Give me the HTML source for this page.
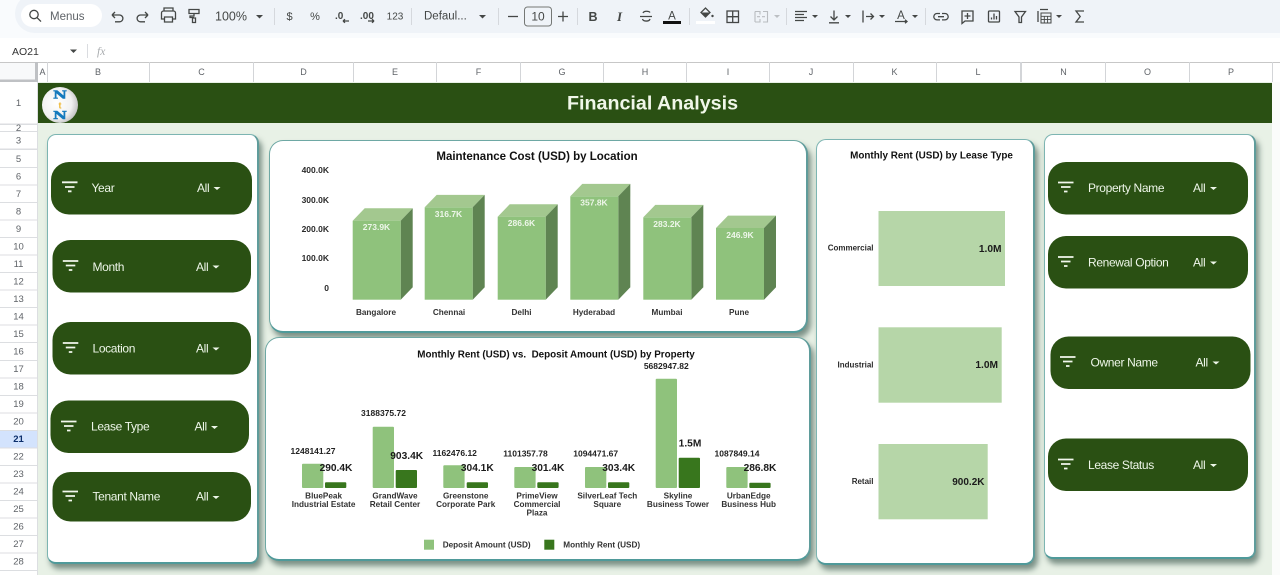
<!DOCTYPE html>
<html lang="en">
<head>
<meta charset="utf-8">
<title>Financial Analysis</title>
<style>
html,body{margin:0;padding:0;width:1280px;height:575px;overflow:hidden;background:#e8f1e6;font-family:"Liberation Sans",sans-serif}
.abs{position:absolute}
#tb{left:0;top:0;width:1280px;height:38px;background:#f9fbfd}
#tb2{left:15px;top:-6px;width:1265px;height:39px;background:#eff3f8;border-radius:20px 0 0 20px}
#fb{left:0;top:38px;width:1280px;height:24px;background:#fff}
#ch{left:0;top:62px;width:1280px;height:20px;background:#fff;border-top:1px solid #c7c7c7;box-sizing:border-box}
#rh{left:0;top:82px;width:38px;height:493px;background:#fff}
#hd{left:38px;top:82.5px;width:1234px;height:40.5px;background:#2a5013}
#rs{left:1272px;top:82px;width:8px;height:493px;background:#fbfcfb}
.p{position:absolute;box-sizing:border-box;background:#fff;border:1px solid #7db5b2;border-bottom:2px solid #4f9a9a;border-right:2px solid #5f9c9b;box-shadow:3px 5px 6px rgba(50,80,70,.6)}
.c{border:1.5px solid #6ea8a4;border-bottom:2.5px solid #4f9a9a;border-right:2.5px solid #5f9c9b}
svg{position:absolute;left:0;top:0}
text{font-family:"Liberation Sans",sans-serif}
.h{font-size:9px;fill:#5f6368;text-anchor:middle}
.r{font-size:9.5px;fill:#5f6368;text-anchor:middle}
.ic{fill:none;stroke:#444746;stroke-width:1.3}
.ar{fill:#444746}
.t{font-weight:bold;fill:#111;text-anchor:middle}
.ax{font-weight:bold;font-size:8.5px;fill:#2b2b2b}
.dl{font-weight:bold;font-size:8.5px;fill:#eef6ea;text-anchor:middle}
.cat{font-weight:bold;font-size:8.2px;fill:#333;text-anchor:middle}
.dep{font-weight:bold;font-size:8.5px;fill:#222;text-anchor:middle}
.rent{font-weight:bold;font-size:10.2px;fill:#1b1b1b;text-anchor:middle}
.pl{font-size:12px;fill:#eef6e9;letter-spacing:-.35px;font-weight:500}
.fl{stroke:#f2f7ee;stroke-width:1.8}
.pa{fill:#eef6e9}
</style>
</head>
<body>
<div class="abs" id="tb"></div>
<div class="abs" id="tb2"></div>
<div class="abs" id="fb"></div>
<div class="abs" id="ch"></div>
<div class="abs" id="rh"></div>
<div class="abs" id="hd"></div>
<div class="abs" id="rs"></div>

<div class="p" style="left:47px;top:134px;width:212px;height:430px;border-radius:9px"></div>
<div class="p c" style="left:269px;top:140px;width:539px;height:193px;border-radius:14px"></div>
<div class="p c" style="left:265px;top:337px;width:546px;height:224px;border-radius:14px"></div>
<div class="p" style="left:816px;top:139px;width:219px;height:426px;border-radius:10px"></div>
<div class="p" style="left:1044px;top:134px;width:212px;height:425px;border-radius:9px"></div>

<svg width="1280" height="575" viewBox="0 0 1280 575" xmlns="http://www.w3.org/2000/svg">
<!-- toolbar -->
<rect x="21" y="4" width="81" height="23" rx="11.5" fill="#fff"/>
<circle cx="34" cy="14.5" r="4.2" class="ic"/><path d="M37 17.6l4 4" class="ic"/>
<text x="50" y="20" font-size="11.5" fill="#5f6368">Menus</text>
<path d="M112 15h7.5a3.4 3.4 0 0 1 0 6.8H115M112 15l3-3M112 15l3 3" class="ic"/>
<path d="M148 15h-7.5a3.4 3.4 0 0 0 0 6.8H145M148 15l-3-3M148 15l-3 3" class="ic"/>
<path d="M164 12v-3h9v3M164 20h-2.5v-6a2 2 0 0 1 2-2h10a2 2 0 0 1 2 2v6H173M164.500 18h8v5h-8z" class="ic" transform="translate(0 -1)"/>
<path d="M189 10.500h10v4h-10zM194 14.500v2.500h-4v1.500h4M192.500 19h3v4.500h-3z" class="ic" transform="translate(0 -1)"/>
<text x="215" y="20.500" font-size="12.500" fill="#444746">100%</text>
<path d="M256 15h7l-3.500 3.500z" class="ar"/>
<rect x="274" y="8" width="1" height="17" fill="#d5d8dd"/>
<text x="289.500" y="20" font-size="11" text-anchor="middle" fill="#444746">$</text>
<text x="315" y="20" font-size="11" text-anchor="middle" fill="#444746">%</text>
<text x="335" y="19" font-size="10" font-weight="bold" fill="#444746">.0</text>
<path d="M349 21h-6M343 21l2-1.700M343 21l2 1.700" class="ic" stroke-width="1.100"/>
<text x="360" y="19" font-size="10" font-weight="bold" fill="#444746">.00</text>
<path d="M368 21h6M374 21l-2-1.700M374 21l-2 1.700" class="ic" stroke-width="1.100"/>
<text x="395" y="19.500" font-size="10" text-anchor="middle" fill="#444746">123</text>
<rect x="411" y="8" width="1" height="17" fill="#d5d8dd"/>
<text x="424" y="19.500" font-size="11.500" fill="#444746">Defaul...</text>
<path d="M479 15h7l-3.500 3.500z" class="ar"/>
<rect x="498" y="8" width="1" height="17" fill="#d5d8dd"/>
<path d="M508 16.500h10" class="ic"/>
<rect x="524.500" y="7" width="27" height="19" rx="3" fill="none" stroke="#747775"/>
<text x="538" y="20.500" font-size="12" text-anchor="middle" fill="#444746">10</text>
<path d="M558 16.500h10M563 11.500v10" class="ic"/>
<rect x="577" y="8" width="1" height="17" fill="#d5d8dd"/>
<text x="593" y="21" font-size="12.500" font-weight="bold" text-anchor="middle" fill="#444746">B</text>
<text x="619.500" y="21" font-size="13" font-weight="bold" font-style="italic" text-anchor="middle" fill="#444746" style="font-family:'Liberation Serif',serif">I</text>
<path d="M640 16.500h12M650 12.500c-1-1.500-6-2-7 .5M642.500 19c.5 2.500 6.500 3 7.500 0" class="ic"/>
<text x="672" y="19.500" font-size="11.500" text-anchor="middle" fill="#444746">A</text>
<rect x="663" y="21" width="18" height="3" fill="#111"/>
<rect x="689" y="8" width="1" height="17" fill="#d5d8dd"/>
<rect x="696" y="21" width="19" height="3" fill="#fff"/>
<path d="M701 12.500l4.500-4.500 4.500 4.500-4.500 4.500z" fill="none" stroke="#444746" stroke-width="1.300"/>
<path d="M701 12.500h9l-4.500 4.500z" fill="#444746"/>
<circle cx="712.500" cy="16" r="1.200" fill="#444746"/>
<rect x="727" y="11" width="11.500" height="11.500" class="ic"/><path d="M732.700 11v11.500M727 16.700h11.500" class="ic"/>
<path d="M755 11.500h5v3M755 22h5v-3M763 11.500h4.500V22H763M755 11.500V22M757 16.700h3M765 16.700h-3" fill="none" stroke="#b9bcc0" stroke-width="1.100"/>
<path d="M774 15h6l-3 3z" fill="#bcbfc3"/>
<rect x="786" y="8" width="1" height="17" fill="#d5d8dd"/>
<path d="M795 11.500h12M795 14.500h9M795 17.500h12M795 20.500h9" class="ic" stroke-width="1.100"/>
<path d="M812 15h6l-3 3z" class="ar"/>
<path d="M834 10.500v9M830.500 16.500l3.500 3.500 3.500-3.500M829 22.800h10" class="ic"/>
<path d="M845 15h6l-3 3z" class="ar"/>
<path d="M863 10.500v12M866 16.500h7M870.500 13.500l3 3-3 3" class="ic"/>
<path d="M879 15h6l-3 3z" class="ar"/>
<text x="901" y="19" font-size="11.500" text-anchor="middle" fill="#444746">A</text>
<path d="M895 21.500h12M905 19.800l2 1.700-2 1.700" class="ic" stroke-width="1.100"/>
<path d="M912 15h6l-3 3z" class="ar"/>
<rect x="925" y="8" width="1" height="17" fill="#d5d8dd"/>
<path d="M940 13.500h-3a3.200 3.200 0 0 0 0 6.400h3M942 13.500h3a3.200 3.200 0 0 1 0 6.400h-3M938 16.700h6" class="ic"/>
<path d="M962 11h11v10h-8l-3 2.500zM967.500 13v6M964.500 16h6" class="ic"/>
<rect x="988.500" y="11" width="11" height="11" rx="1" class="ic" stroke-width="1.100"/>
<path d="M991.500 19.500v-2M994 19.500v-6M996.500 19.500v-3.500" class="ic" stroke-width="1.100"/>
<path d="M1015 11.500h10.500l-4 5.500v5.500h-2.500V17z" class="ic"/>
<path d="M1038 11v11M1040 9.500h8" class="ic" stroke-width="1.100"/>
<rect x="1041" y="13" width="10" height="10" fill="none" stroke="#444746"/>
<path d="M1041 16.300h10M1041 19.600h10M1044.300 16.300v6.700M1047.600 16.300v6.700" stroke="#444746" stroke-width=".9"/>
<path d="M1056 15h6l-3 3z" class="ar"/>
<path d="M1084 11h-8l4.200 5.500-4.200 5.500h8" class="ic" stroke-width="1.600"/>

<!-- formula bar -->
<text x="12" y="55" font-size="10.500" fill="#333">AO21</text>
<path d="M70 49.500h7l-3.500 3.500z" class="ar"/>
<rect x="87" y="44" width="1" height="14" fill="#dadce0"/>
<text x="97" y="55" font-size="11.500" font-style="italic" fill="#a8abae" style="font-family:'Liberation Serif',serif">fx</text>

<!-- column headers -->
<g fill="#d3d5d8">
<rect x="47" y="62" width="1" height="20"/><rect x="149" y="62" width="1" height="20"/><rect x="253" y="62" width="1" height="20"/><rect x="353" y="62" width="1" height="20"/><rect x="436" y="62" width="1" height="20"/><rect x="520" y="62" width="1" height="20"/><rect x="603" y="62" width="1" height="20"/><rect x="686" y="62" width="1" height="20"/><rect x="769" y="62" width="1" height="20"/><rect x="853" y="62" width="1" height="20"/><rect x="936" y="62" width="1" height="20"/><rect x="1020" y="62" width="2" height="20"/><rect x="1105" y="62" width="1" height="20"/><rect x="1189" y="62" width="1" height="20"/><rect x="1272" y="62" width="1" height="20"/>
</g>
<rect x="0" y="63" width="38" height="19" fill="#f8f9fa"/>
<rect x="35" y="62" width="3" height="20" fill="#bfc1c4"/><rect x="0" y="79.500" width="38" height="2.500" fill="#bfc1c4"/>
<text class="h" x="42.500" y="75">A</text><text class="h" x="98" y="75">B</text><text class="h" x="201.500" y="75">C</text><text class="h" x="303.500" y="75">D</text><text class="h" x="395" y="75">E</text><text class="h" x="478.500" y="75">F</text><text class="h" x="562" y="75">G</text><text class="h" x="645" y="75">H</text><text class="h" x="728" y="75">I</text><text class="h" x="811" y="75">J</text><text class="h" x="894.500" y="75">K</text><text class="h" x="978" y="75">L</text><text class="h" x="1063.500" y="75">N</text><text class="h" x="1147.500" y="75">O</text><text class="h" x="1231" y="75">P</text>

<!-- row headers -->
<rect x="0" y="430.500" width="37" height="17.500" fill="#d3e3fd"/>
<g fill="#dcdee1">
<rect x="0" y="123.500" width="37" height="1.500"/><rect x="0" y="131" width="37" height="1"/><rect x="0" y="148.500" width="37" height="1.500"/><rect x="0" y="167" width="37" height="1"/><rect x="0" y="184.500" width="37" height="1"/><rect x="0" y="202" width="37" height="1"/><rect x="0" y="219.500" width="37" height="1"/><rect x="0" y="237" width="37" height="1"/><rect x="0" y="254.500" width="37" height="1"/><rect x="0" y="272" width="37" height="1"/><rect x="0" y="289.500" width="37" height="1"/><rect x="0" y="307" width="37" height="1"/><rect x="0" y="324.500" width="37" height="1"/><rect x="0" y="342" width="37" height="1"/><rect x="0" y="360" width="37" height="1"/><rect x="0" y="377.500" width="37" height="1"/><rect x="0" y="395" width="37" height="1"/><rect x="0" y="412.500" width="37" height="1"/><rect x="0" y="430" width="37" height="1"/><rect x="0" y="447.500" width="37" height="1"/><rect x="0" y="465" width="37" height="1"/><rect x="0" y="482.500" width="37" height="1"/><rect x="0" y="500" width="37" height="1"/><rect x="0" y="517.500" width="37" height="1"/><rect x="0" y="535" width="37" height="1"/><rect x="0" y="552.500" width="37" height="1"/><rect x="0" y="570" width="37" height="1"/>
<rect x="37" y="82" width="1" height="493"/>
</g>
<text class="r" x="18.500" y="106">1</text><text class="r" x="18.500" y="131">2</text><text class="r" x="18.500" y="143.500">3</text><text class="r" x="18.500" y="162">5</text><text class="r" x="18.500" y="179.500">6</text><text class="r" x="18.500" y="197">7</text><text class="r" x="18.500" y="214.500">8</text><text class="r" x="18.500" y="232">9</text><text class="r" x="18.500" y="249.500">10</text><text class="r" x="18.500" y="267">11</text><text class="r" x="18.500" y="284.500">12</text><text class="r" x="18.500" y="302">13</text><text class="r" x="18.500" y="319.500">14</text><text class="r" x="18.500" y="337">15</text><text class="r" x="18.500" y="354.500">16</text><text class="r" x="18.500" y="372">17</text><text class="r" x="18.500" y="389.500">18</text><text class="r" x="18.500" y="407">19</text><text class="r" x="18.500" y="424.500">20</text><text class="r" x="18.500" y="442" font-weight="bold" style="fill:#0b2e6b">21</text><text class="r" x="18.500" y="459.500">22</text><text class="r" x="18.500" y="477">23</text><text class="r" x="18.500" y="494.500">24</text><text class="r" x="18.500" y="512">25</text><text class="r" x="18.500" y="529.500">26</text><text class="r" x="18.500" y="547">27</text><text class="r" x="18.500" y="564.500">28</text>

<!-- header -->
<defs><radialGradient id="lg" cx=".4" cy=".45" r=".65"><stop offset="0" stop-color="#fff"/><stop offset=".65" stop-color="#f1f1f1"/><stop offset="1" stop-color="#b8b8b8"/></radialGradient></defs>
<circle cx="60" cy="105" r="18" fill="url(#lg)"/>
<text x="53" y="98.500" font-weight="bold" font-size="11" textLength="14" lengthAdjust="spacingAndGlyphs" fill="#1479bd" stroke="#1479bd" stroke-width=".5" style="font-family:'DejaVu Serif',serif">N</text>
<text x="60" y="108.500" font-weight="bold" font-size="9" text-anchor="middle" fill="#eeb62f">t</text>
<text x="53" y="119" font-weight="bold" font-size="11" textLength="14" lengthAdjust="spacingAndGlyphs" fill="#1479bd" stroke="#1479bd" stroke-width=".5" style="font-family:'DejaVu Serif',serif">N</text>
<text x="652.500" y="109.500" font-size="19.700" font-weight="bold" text-anchor="middle" fill="#f0f7e9">Financial Analysis</text>

<!-- left pills -->
<rect x="51" y="162" width="201" height="52.500" rx="18" fill="#2a5013"/>
<path class="fl" d="M62 182.300h15.500M65 187h9.500M68 191.300h3.500"/><text class="pl" x="91.500" y="192">Year</text><text class="pl" x="197" y="192">All</text><path class="pa" d="M213.500 187h7l-3.500 3z"/>
<rect x="52.500" y="240" width="198.500" height="52.500" rx="18" fill="#2a5013"/>
<path class="fl" d="M62.800 261h15.500M65.800 265.500h9.500M68.800 270h3.500"/><text class="pl" x="92.500" y="271">Month</text><text class="pl" x="196" y="271">All</text><path class="pa" d="M212.500 265.500h7l-3.500 3z"/>
<rect x="52.500" y="322" width="198.500" height="52.500" rx="18" fill="#2a5013"/>
<path class="fl" d="M62.800 343h15.500M65.800 347.500h9.500M68.800 352h3.500"/><text class="pl" x="92.500" y="352.500">Location</text><text class="pl" x="196" y="352.500">All</text><path class="pa" d="M212.500 347.500h7l-3.500 3z"/>
<rect x="50.500" y="400.500" width="198.500" height="52.500" rx="18" fill="#2a5013"/>
<path class="fl" d="M61 421.500h15.500M64 426h9.500M67 430.500h3.500"/><text class="pl" x="91" y="430.500">Lease Type</text><text class="pl" x="194.500" y="430.500">All</text><path class="pa" d="M211 426h7l-3.500 3z"/>
<rect x="52.500" y="472" width="198.500" height="49.500" rx="18" fill="#2a5013"/>
<path class="fl" d="M62.500 491.500h15.500M65.500 496h9.500M68.500 500.500h3.500"/><text class="pl" x="92.500" y="500.500">Tenant Name</text><text class="pl" x="196" y="500.500">All</text><path class="pa" d="M212.500 496h7l-3.500 3z"/>

<!-- right pills -->
<rect x="1048" y="162" width="200" height="52.500" rx="18" fill="#2a5013"/>
<path class="fl" d="M1058 182.500h15.500M1061 187h9.500M1064 191.500h3.500"/><text class="pl" x="1088" y="192">Property Name</text><text class="pl" x="1193" y="192">All</text><path class="pa" d="M1210 187h7l-3.500 3z"/>
<rect x="1048" y="236" width="200" height="52.500" rx="18" fill="#2a5013"/>
<path class="fl" d="M1058 257h15.500M1061 261.500h9.500M1064 266h3.500"/><text class="pl" x="1088" y="266.500">Renewal Option</text><text class="pl" x="1193" y="266.500">All</text><path class="pa" d="M1210 261.500h7l-3.500 3z"/>
<rect x="1050.500" y="336.500" width="200" height="52.500" rx="18" fill="#2a5013"/>
<path class="fl" d="M1060 357h15.500M1063 361.500h9.500M1066 366h3.500"/><text class="pl" x="1090.500" y="366.500">Owner Name</text><text class="pl" x="1195.500" y="366.500">All</text><path class="pa" d="M1212.500 361.500h7l-3.500 3z"/>
<rect x="1048" y="438.500" width="200" height="52.500" rx="18" fill="#2a5013"/>
<path class="fl" d="M1058 459.500h15.500M1061 464h9.500M1064 468.500h3.500"/><text class="pl" x="1088" y="469">Lease Status</text><text class="pl" x="1193" y="469">All</text><path class="pa" d="M1210 464h7l-3.500 3z"/>

<!-- chart 1 -->
<text class="t" x="537" y="160" font-size="11.500">Maintenance Cost (USD) by Location</text>
<g text-anchor="end">
<text class="ax" x="329" y="173">400.0K</text><text class="ax" x="329" y="203">300.0K</text><text class="ax" x="329" y="232">200.0K</text><text class="ax" x="329" y="261">100.0K</text><text class="ax" x="329" y="291">0</text>
</g>
<g>
<path d="M352.700 220.700l12-12.400h48l-12 12.400z" fill="#a3c88f"/><path d="M400.700 220.700l12-12.400v79l-12 12.400z" fill="#5f8452"/><rect x="352.700" y="220.700" width="48" height="79" fill="#8fc27c"/>
<path d="M424.700 207.300l12-12.400h48l-12 12.400z" fill="#a3c88f"/><path d="M472.700 207.300l12-12.400v92.400l-12 12.400z" fill="#5f8452"/><rect x="424.700" y="207.300" width="48" height="92.400" fill="#8fc27c"/>
<path d="M497.700 216.700l12-12.400h48l-12 12.400z" fill="#a3c88f"/><path d="M545.700 216.700l12-12.400v83l-12 12.400z" fill="#5f8452"/><rect x="497.700" y="216.700" width="48" height="83" fill="#8fc27c"/>
<path d="M570.300 196.300l12-12.400h48l-12 12.400z" fill="#a3c88f"/><path d="M618.300 196.300l12-12.400v103.400l-12 12.400z" fill="#5f8452"/><rect x="570.300" y="196.300" width="48" height="103.400" fill="#8fc27c"/>
<path d="M643.300 217.300l12-12.400h48l-12 12.400z" fill="#a3c88f"/><path d="M691.300 217.300l12-12.400v82.400l-12 12.400z" fill="#5f8452"/><rect x="643.300" y="217.300" width="48" height="82.400" fill="#8fc27c"/>
<path d="M716 228l12-12.400h48l-12 12.400z" fill="#a3c88f"/><path d="M764 228l12-12.400v71.700l-12 12.400z" fill="#5f8452"/><rect x="716" y="228" width="48" height="71.700" fill="#8fc27c"/>
</g>
<text class="dl" x="376.500" y="230">273.9K</text><text class="dl" x="448.500" y="217">316.7K</text><text class="dl" x="521.500" y="226">286.6K</text><text class="dl" x="594" y="205.500">357.8K</text><text class="dl" x="667" y="227">283.2K</text><text class="dl" x="740" y="238">246.9K</text>
<text class="cat" x="376" y="315">Bangalore</text><text class="cat" x="449" y="315">Chennai</text><text class="cat" x="521.500" y="315">Delhi</text><text class="cat" x="594" y="315">Hyderabad</text><text class="cat" x="667" y="315">Mumbai</text><text class="cat" x="739" y="315">Pune</text>

<!-- chart 2 -->
<text class="t" x="556" y="357.500" font-size="9.850">Monthly Rent (USD) vs.&#160; Deposit Amount (USD) by Property</text>
<g fill="#8fc27c">
<rect x="302" y="463.700" width="21.300" height="24.300" rx="1"/><rect x="372.700" y="426.700" width="21.300" height="61.300" rx="1"/><rect x="443.300" y="465.300" width="21.300" height="22.700" rx="1"/><rect x="514.300" y="467" width="21.300" height="21" rx="1"/><rect x="585" y="467" width="21.300" height="21" rx="1"/><rect x="655.700" y="378.700" width="21.300" height="109.300" rx="1"/><rect x="726.300" y="467" width="21.300" height="21" rx="1"/>
<rect x="424" y="539.700" width="10" height="10"/>
</g>
<g fill="#38761d">
<rect x="325" y="482.300" width="21.300" height="5.700" rx="1"/><rect x="395.700" y="470" width="21.300" height="18" rx="1"/><rect x="466.700" y="482.300" width="21.300" height="5.700" rx="1"/><rect x="537.300" y="482.300" width="21.300" height="5.700" rx="1"/><rect x="608" y="482.300" width="21.300" height="5.700" rx="1"/><rect x="678.700" y="457.700" width="21.300" height="30.300" rx="1"/><rect x="749.300" y="482.700" width="21.300" height="5.300" rx="1"/>
<rect x="544.300" y="539.700" width="10" height="10"/>
</g>
<text class="dep" x="313" y="454">1248141.27</text><text class="dep" x="383.500" y="416">3188375.72</text><text class="dep" x="454.700" y="456">1162476.12</text><text class="dep" x="525.500" y="456.700">1101357.78</text><text class="dep" x="595.700" y="456.300">1094471.67</text><text class="dep" x="666.300" y="369">5682947.82</text><text class="dep" x="737" y="456.300">1087849.14</text>
<text class="rent" x="336" y="471">290.4K</text><text class="rent" x="406.700" y="459">903.4K</text><text class="rent" x="477.300" y="471">304.1K</text><text class="rent" x="548" y="471">301.4K</text><text class="rent" x="618.700" y="471">303.4K</text><text class="rent" x="690" y="446.500">1.5M</text><text class="rent" x="760" y="471">286.8K</text>
<text class="cat"><tspan x="323.600" y="498.300">BluePeak</tspan><tspan x="323.600" y="507">Industrial Estate</tspan></text>
<text class="cat"><tspan x="395" y="498.300">GrandWave</tspan><tspan x="395" y="507">Retail Center</tspan></text>
<text class="cat"><tspan x="465.700" y="498.300">Greenstone</tspan><tspan x="465.700" y="507">Corporate Park</tspan></text>
<text class="cat"><tspan x="537" y="498.300">PrimeView</tspan><tspan x="537" y="507">Commercial</tspan><tspan x="537" y="515.500">Plaza</tspan></text>
<text class="cat"><tspan x="607.300" y="498.300">SilverLeaf Tech</tspan><tspan x="607.300" y="507">Square</tspan></text>
<text class="cat"><tspan x="678" y="498.300">Skyline</tspan><tspan x="678" y="507">Business Tower</tspan></text>
<text class="cat"><tspan x="748.700" y="498.300">UrbanEdge</tspan><tspan x="748.700" y="507">Business Hub</tspan></text>
<text class="cat" style="text-anchor:start" x="442.700" y="547.500">Deposit Amount (USD)</text>
<text class="cat" style="text-anchor:start" x="563.300" y="547.500">Monthly Rent (USD)</text>

<!-- chart 3 -->
<text class="t" x="931.500" y="158.500" font-size="9.900">Monthly Rent (USD) by Lease Type</text>
<g fill="#b6d6a8">
<rect x="878.500" y="211" width="126.500" height="75"/>
<rect x="878.500" y="327.300" width="123.200" height="75.400"/>
<rect x="878.500" y="444" width="109.200" height="75.300"/>
</g>
<g text-anchor="end">
<text class="ax" style="font-size:8px" x="873.500" y="250.500">Commercial</text>
<text class="ax" style="font-size:8px" x="873.500" y="367.500">Industrial</text>
<text class="ax" style="font-size:8px" x="873.500" y="484">Retail</text>
<text font-weight="bold" font-size="10.200" fill="#1b1b1b" x="1001.500" y="252">1.0M</text>
<text font-weight="bold" font-size="10.200" fill="#1b1b1b" x="998" y="368">1.0M</text>
<text font-weight="bold" font-size="10" fill="#1b1b1b" x="984.500" y="485">900.2K</text>
</g>
</svg>
</body>
</html>
